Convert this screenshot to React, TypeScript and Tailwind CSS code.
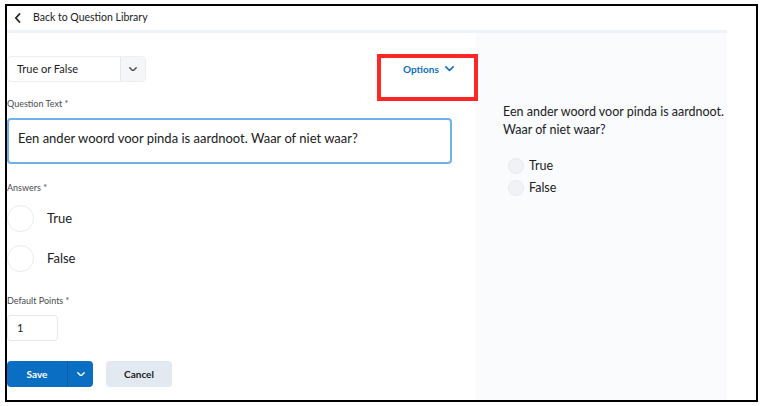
import React from "react";

const Chevron = ({ className = "", color = "currentColor", w = 10 }: { className?: string; color?: string; w?: number }) => (
  <svg width={w} height={w * 0.6} viewBox="0 0 10 6" className={className} fill="none">
    <path d="M1 1l4 4 4-4" stroke={color} strokeWidth="1.8" strokeLinecap="round" strokeLinejoin="round" />
  </svg>
);

export default function App() {
  return (
    <div className="w-[764px] h-[406px] bg-white relative overflow-hidden" style={{ fontFamily: "Lato, 'Noto Sans', sans-serif" }}>
      <div className="ml-[5px] mt-[4px] w-[753px] h-[398px] border-2 border-black flex flex-col relative">
        {/* header */}
        <div className="h-[24px] flex items-center shrink-0">
          <svg width="7" height="10" viewBox="0 0 7 10" className="ml-[7px]" fill="none">
            <path d="M5.5 1L1.8 5l3.7 4" stroke="#202122" strokeWidth="1.8" strokeLinecap="round" strokeLinejoin="round" />
          </svg>
          <span className="ml-[12px] text-[10.5px] text-[#202122]">Back to Question Library</span>
        </div>
        <div className="h-[3px] w-[720px] bg-[#eef3f9] shrink-0" />
        <div className="flex flex-1">
          {/* left column */}
          <div className="w-[469px] flex flex-col">
            <div className="flex items-center mt-[23px] h-[26px]">
              <div className="w-[139px] h-[26px] rounded-[4px] border border-[#eceef1] flex">
                <div className="flex-1 flex items-center pl-[9px] text-[11px] text-[#202122]">True or False</div>
                <div className="w-[25px] bg-[#f5f6f8] border-l border-[#e6e8eb] flex items-center justify-center rounded-r-[4px]">
                  <Chevron color="#494c4e" w={8} />
                </div>
              </div>
              <div className="ml-[257px] flex items-center text-[#0a6fc2] text-[10px] font-bold">
                Options
                <Chevron className="ml-[6px]" color="#0a6fc2" w={9} />
              </div>
            </div>
            <div className="mt-[16px] text-[9px] text-[#494c4e] leading-[12px]">Question Text *</div>
            <div className="mt-[8px] w-[445px] h-[46px] rounded-[4px] border-2 border-[#6fb1ea] flex items-start pt-[9px] pl-[9px] text-[13px] text-[#202122] leading-[18px]">
              Een ander woord voor pinda is aardnoot. Waar of niet waar?
            </div>
            <div className="mt-[18px] text-[9px] text-[#494c4e] leading-[12px]">Answers *</div>
            <div className="mt-[11px] flex items-center h-[27px]">
              <div className="w-[27px] h-[27px] rounded-full border border-[#e7eaee]" />
              <span className="ml-[13px] text-[13px] text-[#202122]">True</span>
            </div>
            <div className="mt-[13px] flex items-center h-[27px]">
              <div className="w-[27px] h-[27px] rounded-full border border-[#e7eaee]" />
              <span className="ml-[13px] text-[13px] text-[#202122]">False</span>
            </div>
            <div className="mt-[23px] text-[9px] text-[#494c4e] leading-[12px]">Default Points *</div>
            <div className="mt-[8px] w-[51px] h-[26px] rounded-[4px] border border-[#e5e8ec] flex items-center pl-[9px] text-[11px] text-[#202122]">1</div>
            <div className="mt-[20px] flex">
              <div className="w-[86px] h-[26px] rounded-[4px] bg-[#0a6fc2] flex">
                <div className="w-[60px] flex items-center justify-center text-white text-[10px] font-bold">Save</div>
                <div className="flex-1 border-l border-[#095ea6] flex items-center justify-center">
                  <Chevron color="#ffffff" w={8} />
                </div>
              </div>
              <div className="ml-[13px] w-[66px] h-[26px] rounded-[4px] bg-[#e3e9f1] flex items-center justify-center text-[10px] font-bold text-[#202122]">Cancel</div>
            </div>
          </div>
          {/* right preview panel */}
          <div className="w-[251px] bg-[#f9fbfd] pl-[27px] pt-[70px]">
            <div className="text-[12.5px] leading-[18px] text-[#202122] whitespace-nowrap">
              Een ander woord voor pinda is aardnoot.
              <br />
              Waar of niet waar?
            </div>
            <div className="mt-[19px] flex items-center h-[16px] ml-[5px]">
              <div className="w-[16px] h-[16px] rounded-full bg-[#f0f2f5] border border-[#e8ebef]" />
              <span className="ml-[5px] text-[12.5px] text-[#202122]">True</span>
            </div>
            <div className="mt-[6px] flex items-center h-[16px] ml-[5px]">
              <div className="w-[16px] h-[16px] rounded-full bg-[#f0f2f5] border border-[#e8ebef]" />
              <span className="ml-[5px] text-[12.5px] text-[#202122]">False</span>
            </div>
          </div>
        </div>
        {/* annotation box */}
        <div className="absolute left-[370px] top-[48px] w-[101px] h-[47px] border-4 border-[#ff2626]" />
      </div>
    </div>
  );
}
